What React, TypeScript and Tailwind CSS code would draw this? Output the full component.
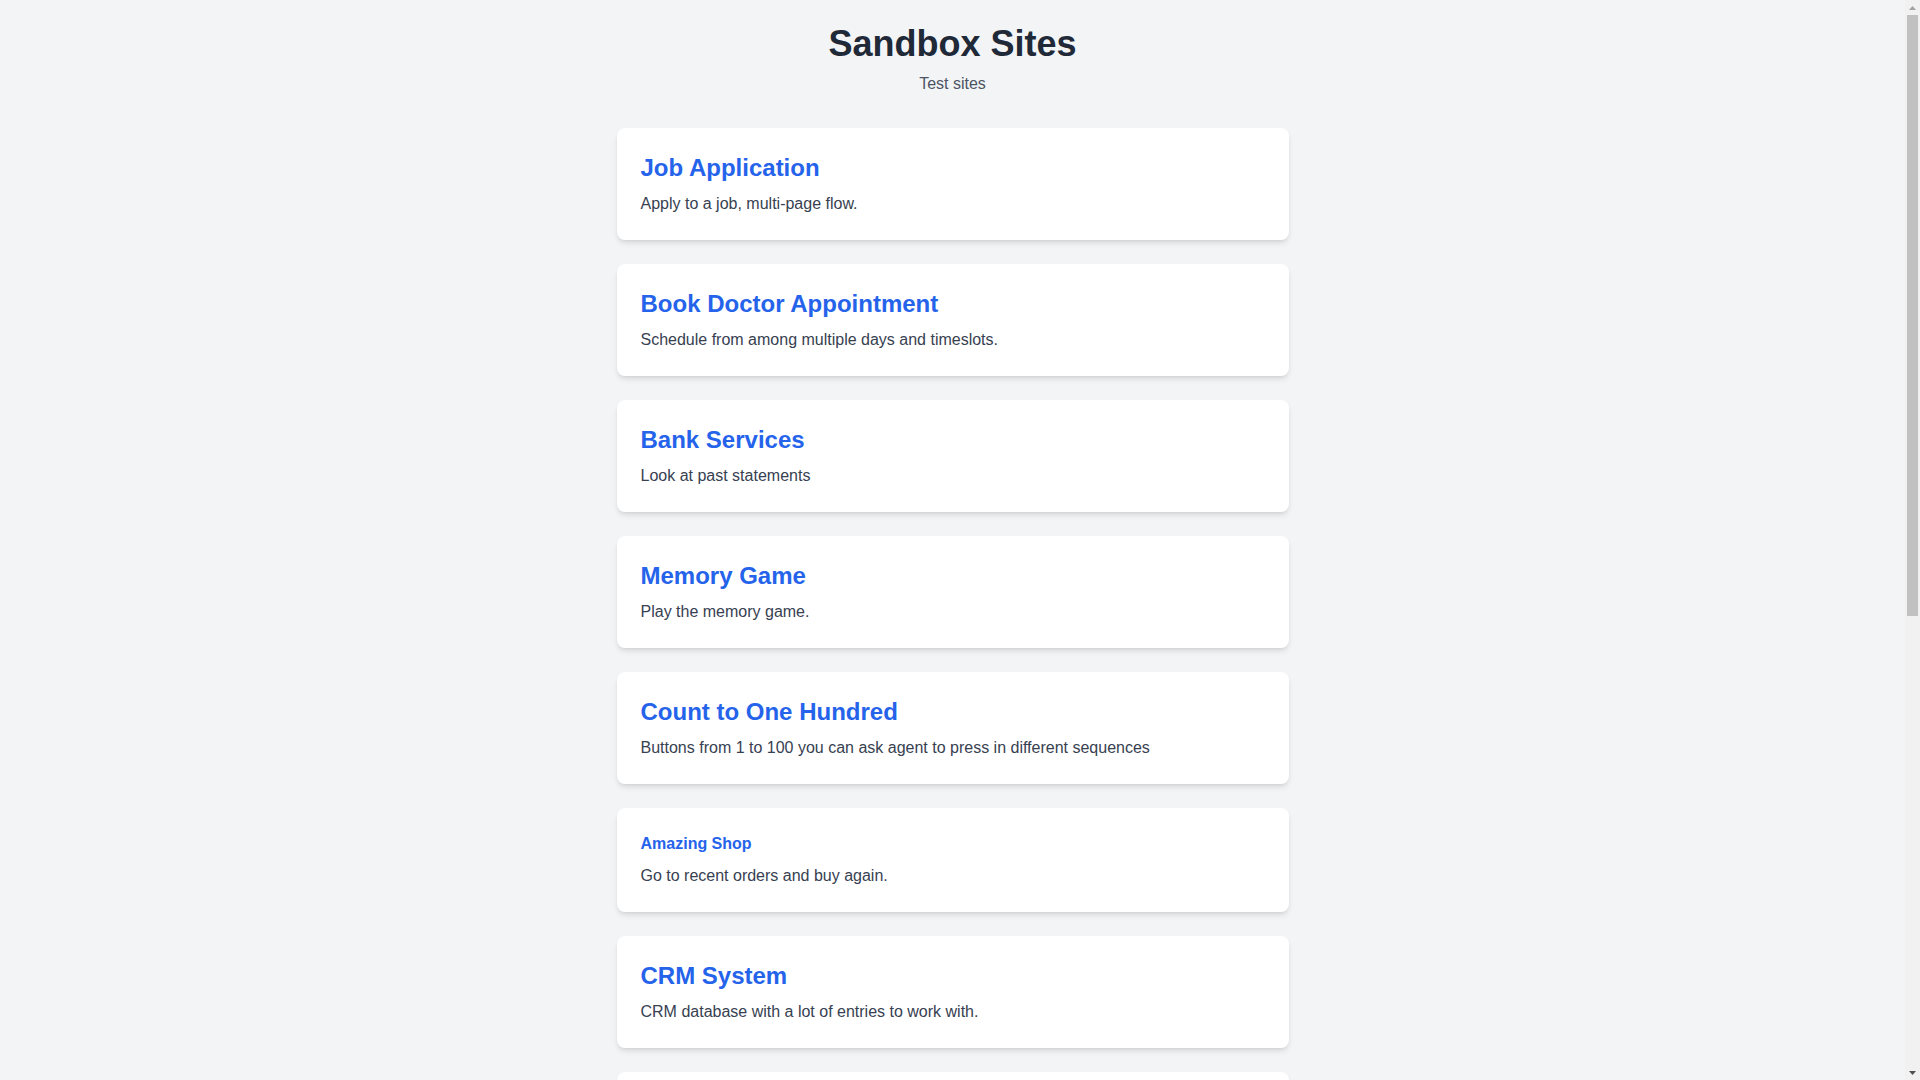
const sites = [
  { title: 'Job Application', description: 'Apply to a job, multi-page flow.' },
  { title: 'Book Doctor Appointment', description: 'Schedule from among multiple days and timeslots.' },
  { title: 'Bank Services', description: 'Look at past statements' },
  { title: 'Memory Game', description: 'Play the memory game.' },
  { title: 'Count to One Hundred', description: 'Buttons from 1 to 100 you can ask agent to press in different sequences' },
  { title: 'Amazing Shop', description: 'Go to recent orders and buy again.', small: true },
  { title: 'CRM System', description: 'CRM database with a lot of entries to work with.' },
  { title: 'Flight Booking', description: 'Search and book flights.' },
];

// classic scrollbar drawn beside the page
function Scrollbar() {
  return (
    <div className="w-[15px] shrink-0 bg-[#f1f1f1] flex flex-col">
      <div className="h-[15px] flex items-center justify-center">
        <svg width="7" height="4" viewBox="0 0 7 4">
          <polygon points="3.5,0 7,4 0,4" fill="#a3a3a3" />
        </svg>
      </div>
      <div className="h-[601px] mx-[2px] bg-[#c1c1c1]" />
      <div className="flex-1" />
      <div className="h-[15px] flex items-center justify-center">
        <svg width="7" height="4" viewBox="0 0 7 4">
          <polygon points="0,0 7,0 3.5,4" fill="#505050" />
        </svg>
      </div>
    </div>
  );
}

export default function App() {
  return (
    <div className="h-screen flex overflow-hidden bg-[#f3f4f6] font-['Liberation_Sans',Arial,sans-serif]">
      <div className="flex-1 overflow-hidden pb-12">
        <div className="max-w-2xl mx-auto">
          <div className="pt-6 mb-8 text-center">
            <h1 className="text-4xl font-bold text-[#1f2937]">Sandbox Sites</h1>
            <p className="mt-2 text-[#4b5563]">Test sites</p>
          </div>

          <div className="space-y-6">
            {sites.map((site) => (
              <a key={site.title} href="#" className="block bg-white rounded-lg shadow-md p-6">
                <h2
                  className={
                    site.small
                      ? 'text-base font-semibold text-[#2563eb] mb-2'
                      : 'text-2xl font-semibold text-[#2563eb] mb-2'
                  }
                >
                  {site.title}
                </h2>
                <p className="text-[#374151]">{site.description}</p>
              </a>
            ))}
          </div>
        </div>
      </div>
      <Scrollbar />
    </div>
  );
}
